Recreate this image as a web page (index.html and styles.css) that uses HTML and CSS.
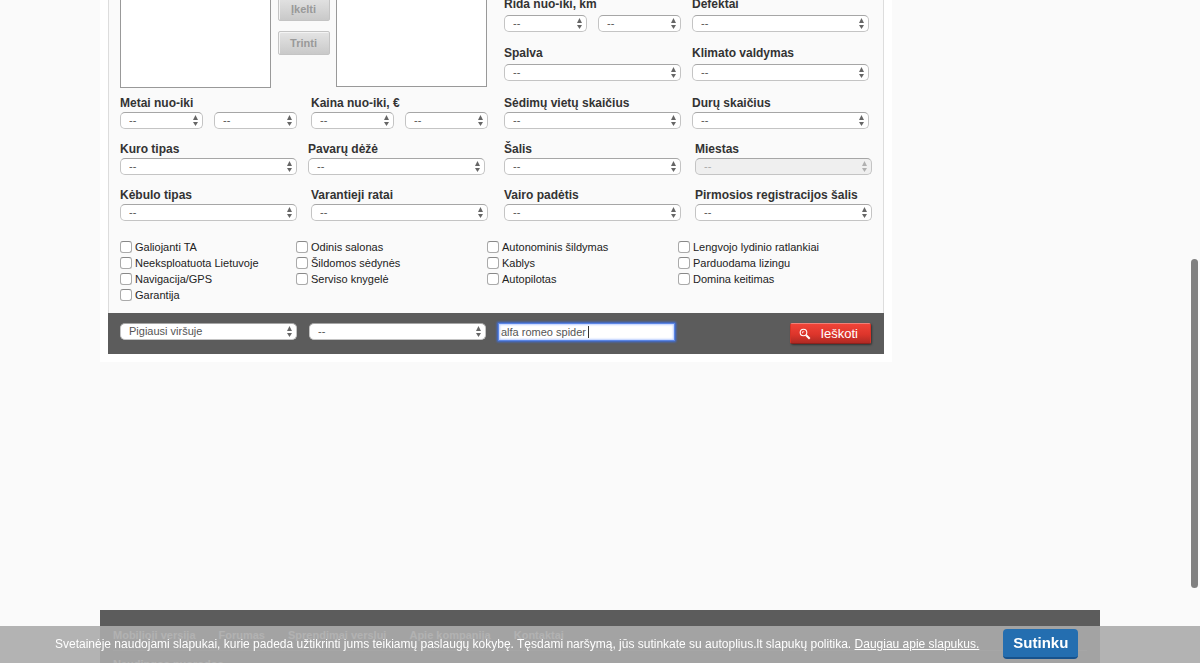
FILE: index.html
```html
<!DOCTYPE html>
<html lang="lt">
<head>
<meta charset="utf-8">
<title>Autoplius paieška</title>
<link rel="stylesheet" href="styles.css">
</head>
<body>
<div class="page">
  <main class="content">
    <form class="search">
      <div class="fields">
        <div class="top">
          <div class="models">
            <select class="list list-source" multiple aria-label="Modeliai"></select>
            <div class="models-actions">
              <button class="btn-grey" type="button" disabled>Įkelti</button>
              <button class="btn-grey" type="button" disabled>Trinti</button>
            </div>
            <select class="list" multiple aria-label="Pasirinkti modeliai"></select>
          </div>
          <div class="top-fields">
            <div class="field"><label for="rida">Rida nuo-iki, km</label>
              <div class="range"><select id="rida"><option>--</option></select><select aria-label="Rida iki"><option>--</option></select></div></div>
            <div class="field"><label for="defektai">Defektai</label><select id="defektai"><option>--</option></select></div>
            <div class="field"><label for="spalva">Spalva</label><select id="spalva"><option>--</option></select></div>
            <div class="field"><label for="klimatas">Klimato valdymas</label><select id="klimatas"><option>--</option></select></div>
          </div>
        </div>
        <div class="row row-a">
          <div class="field"><label for="metai">Metai nuo-iki</label>
            <div class="range"><select id="metai"><option>--</option></select><select aria-label="Metai iki"><option>--</option></select></div></div>
          <div class="field"><label for="kaina">Kaina nuo-iki, €</label>
            <div class="range"><select id="kaina"><option>--</option></select><select aria-label="Kaina iki"><option>--</option></select></div></div>
          <div class="field"><label for="vietos">Sėdimų vietų skaičius</label><select id="vietos"><option>--</option></select></div>
          <div class="field"><label for="durys">Durų skaičius</label><select id="durys"><option>--</option></select></div>
        </div>
        <div class="row row-b">
          <div class="field"><label for="kuras">Kuro tipas</label><select id="kuras"><option>--</option></select></div>
          <div class="field"><label for="deze">Pavarų dėžė</label><select id="deze"><option>--</option></select></div>
          <div class="field"><label for="salis">Šalis</label><select id="salis"><option>--</option></select></div>
          <div class="field"><label for="miestas">Miestas</label><select id="miestas" disabled><option>--</option></select></div>
        </div>
        <div class="row row-c">
          <div class="field"><label for="kebulas">Kėbulo tipas</label><select id="kebulas"><option>--</option></select></div>
          <div class="field"><label for="ratai">Varantieji ratai</label><select id="ratai"><option>--</option></select></div>
          <div class="field"><label for="vairas">Vairo padėtis</label><select id="vairas"><option>--</option></select></div>
          <div class="field"><label for="registracija">Pirmosios registracijos šalis</label><select id="registracija"><option>--</option></select></div>
        </div>
        <div class="checks">
          <div class="check-col">
            <label class="check"><input type="checkbox">Galiojanti TA</label>
            <label class="check"><input type="checkbox">Neeksploatuota Lietuvoje</label>
            <label class="check"><input type="checkbox">Navigacija/GPS</label>
            <label class="check"><input type="checkbox">Garantija</label>
          </div>
          <div class="check-col">
            <label class="check"><input type="checkbox">Odinis salonas</label>
            <label class="check"><input type="checkbox">Šildomos sėdynės</label>
            <label class="check"><input type="checkbox">Serviso knygelė</label>
          </div>
          <div class="check-col">
            <label class="check"><input type="checkbox">Autonominis šildymas</label>
            <label class="check"><input type="checkbox">Kablys</label>
            <label class="check"><input type="checkbox">Autopilotas</label>
          </div>
          <div class="check-col">
            <label class="check"><input type="checkbox">Lengvojo lydinio ratlankiai</label>
            <label class="check"><input type="checkbox">Parduodama lizingu</label>
            <label class="check"><input type="checkbox">Domina keitimas</label>
          </div>
        </div>
      </div>
      <div class="bar">
        <select aria-label="Rikiavimas"><option>Pigiausi viršuje</option></select>
        <select aria-label="Laikotarpis"><option>--</option></select>
        <div class="query-box">
          <input class="query" type="text" value="alfa romeo spider" aria-label="Raktažodis">
          <span class="caret"></span>
        </div>
        <button class="btn-search" type="submit">
          <svg class="lens" viewBox="0 0 12 12" width="12" height="12" aria-hidden="true">
            <circle cx="4.500" cy="4.500" r="3.300" fill="none" stroke="#fff" stroke-width="1.100"/>
            <path d="M3.500 5.300V3.800H5.200" fill="none" stroke="#fff" stroke-width=".8"/>
            <path d="M7.200 7.200l3.500 3.500" stroke="#fff" stroke-width="2"/>
          </svg>Ieškoti</button>
      </div>
    </form>
  </main>
  <footer class="footer">
    <nav class="footer-nav">
      <a href="#">Mobilioji versija</a><a href="#">Forumas</a><a href="#">Sprendimai verslui</a><a href="#">Apie kompaniją</a><a href="#">Kontaktai</a>
    </nav>
    <strong class="footer-title">Naudingos nuorodos</strong>
  </footer>
</div>
<div class="cookies">
  <p>Svetainėje naudojami slapukai, kurie padeda užtikrinti jums teikiamų paslaugų kokybę. Tęsdami naršymą, jūs sutinkate su autoplius.lt slapukų politika. <a href="#">Daugiau apie slapukus.</a></p>
  <button class="btn-accept" type="button">Sutinku</button>
</div>
<div class="scroll-thumb"></div>
</body>
</html>
```

FILE: styles.css
```css
* { box-sizing: border-box; }
html { overflow: hidden; }
body {
  margin: 0;
  height: 100vh;
  overflow: hidden;
  background: #fafafa;
  color: #333;
  font: 11px/16px "Liberation Sans", Arial, sans-serif;
}
.page { max-width: 1000px; margin: -4px auto 0; }
.content { max-width: 792px; padding: 0 8px 8px; background: #fff; }
.fields {
  padding: 0 11px 10px;
  background: #fafafa;
  border: solid #ddd;
  border-width: 0 1px;
}

/* form controls */
select, input, button { font: inherit; margin: 0; }
select:not([multiple]) {
  appearance: none;
  width: 100%;
  height: 17px;
  padding: 0 14px 0 8px;
  border: 1px solid #c4c4c4;
  border-top-color: #a6a6a6;
  border-radius: 5px;
  color: #555;
  line-height: 15px;
  background: #fff url("data:image/svg+xml,%3Csvg xmlns='http://www.w3.org/2000/svg' width='5' height='11'%3E%3Cpath d='M2.500 0L5 5H0zM2.500 11L0 7h5z' fill='%23666'/%3E%3C/svg%3E") no-repeat right 4px center;
}
select:not([multiple]):disabled { background-color: #efefef; opacity: 1; color: #aaa; background-image: url("data:image/svg+xml,%3Csvg xmlns='http://www.w3.org/2000/svg' width='5' height='11'%3E%3Cpath d='M2.500 0L5 5H0zM2.500 11L0 7h5z' fill='%23b0b0b0'/%3E%3C/svg%3E"); }
.field { display: flex; flex-direction: column; gap: 1px; max-width: 177px; }
.field > label { font-size: 12px; font-weight: bold; white-space: nowrap; }
.range { display: grid; grid-template-columns: 1fr 1fr; gap: 11px; }

/* top block */
.top { display: grid; grid-template-columns: 367px 1fr; gap: 17px; }
.models { display: flex; align-items: flex-start; justify-content: space-between; }
.list {
  width: 151px;
  height: 91px;
  border: 1px solid #999;
  border-top: 0;
  border-radius: 0;
  background: #fff;
}
.list-source { height: 92px; }
.models-actions { display: flex; flex-direction: column; gap: 10px; }
.btn-grey {
  width: 52px;
  height: 24px;
  padding: 0;
  border: 1px solid #c4c4c4;
  border-radius: 2px;
  background: linear-gradient(#e4e4e4, #c9c9c9);
  box-shadow: inset 1px 1px 0 #f4f4f4;
  color: #999;
  font-weight: bold;
}
.btn-grey:first-child { height: 25px; }
.top-fields { display: grid; grid-template-columns: 188px 177px; row-gap: 13px; align-content: start; }
.top-fields .field { gap: 3px; }

/* four column rows */
.row { display: grid; margin-top: 12px; }
.row-a { grid-template-columns: 191px 193px 188px 1fr; margin-top: 7px; }
.row-b { grid-template-columns: 188px 196px 191px 1fr; }
.row-c { grid-template-columns: 191px 193px 191px 1fr; }

.checks { display: grid; grid-template-columns: 176px 191px 191px 1fr; margin-top: 18px; }
.check { display: flex; align-items: center; gap: 3px; height: 16px; color: #222; }
.check input {
  appearance: none;
  width: 12px;
  height: 12px;
  border: 1px solid #aaa;
  border-top-color: #888;
  border-radius: 3px;
  background: #fff;
}

/* bottom bar */
.bar { display: flex; align-items: flex-start; gap: 12px; padding: 10px 13px 10px 12px; background: #5c5c5c; }
.bar select:not([multiple]) { max-width: 177px; }
.query-box { position: relative; display: flex; width: 177px; }
.query {
  width: 100%;
  height: 18px;
  padding: 0 2px;
  border: 1px solid #5b86e5;
  outline: 0;
  background: #fff;
  box-shadow: 0 0 2px 1px #3c6fe0, inset 0 0 2px 1px #bccfff;
  color: #555;
}
.caret { position: absolute; top: 3px; left: 90px; width: 1px; height: 12px; background: #333; }
.btn-search {
  display: flex;
  align-items: center;
  gap: 9px;
  height: 21px;
  margin-left: auto;
  padding: 0 12px 0 8px;
  border: 1px solid #d43328;
  border-top-color: #f08078;
  border-bottom-color: #8e211c;
  border-radius: 2px;
  background: linear-gradient(#f04438, #dd352b 55%, #b02a24);
  box-shadow: 1px 1px 2px #333;
  color: #fff;
  font-size: 13px;
}

/* footer */
.footer { margin-top: 248px; padding: 17px 13px; background: #5c5c5c; }
.footer-nav { display: flex; gap: 23px; padding-bottom: 7px; border-bottom: 1px solid #777; }
.footer a { color: #eee; font-weight: bold; text-decoration: none; }
.footer-title { display: block; padding-top: 5px; color: #eee; }

.cookies {
  position: fixed;
  inset: auto 0 0;
  display: flex;
  align-items: center;
  gap: 24px;
  height: 37px;
  padding: 0 55px 2px;
  background: rgba(171, 171, 171, .9);
  color: #fff;
  font-size: 12px;
}
.cookies p { margin: 0; white-space: nowrap; }
.cookies a { color: inherit; }
.btn-accept {
  height: 30px;
  padding: 0 10px;
  border: 0;
  border-bottom: 2px solid #17528c;
  border-radius: 4px;
  background: #246eb0;
  color: #fff;
  font-size: 15px;
  font-weight: bold;
}
.scroll-thumb {
  position: fixed;
  top: 259px;
  right: 2px;
  width: 7px;
  height: 329px;
  border-radius: 4px;
  background: #808080;
}
```
